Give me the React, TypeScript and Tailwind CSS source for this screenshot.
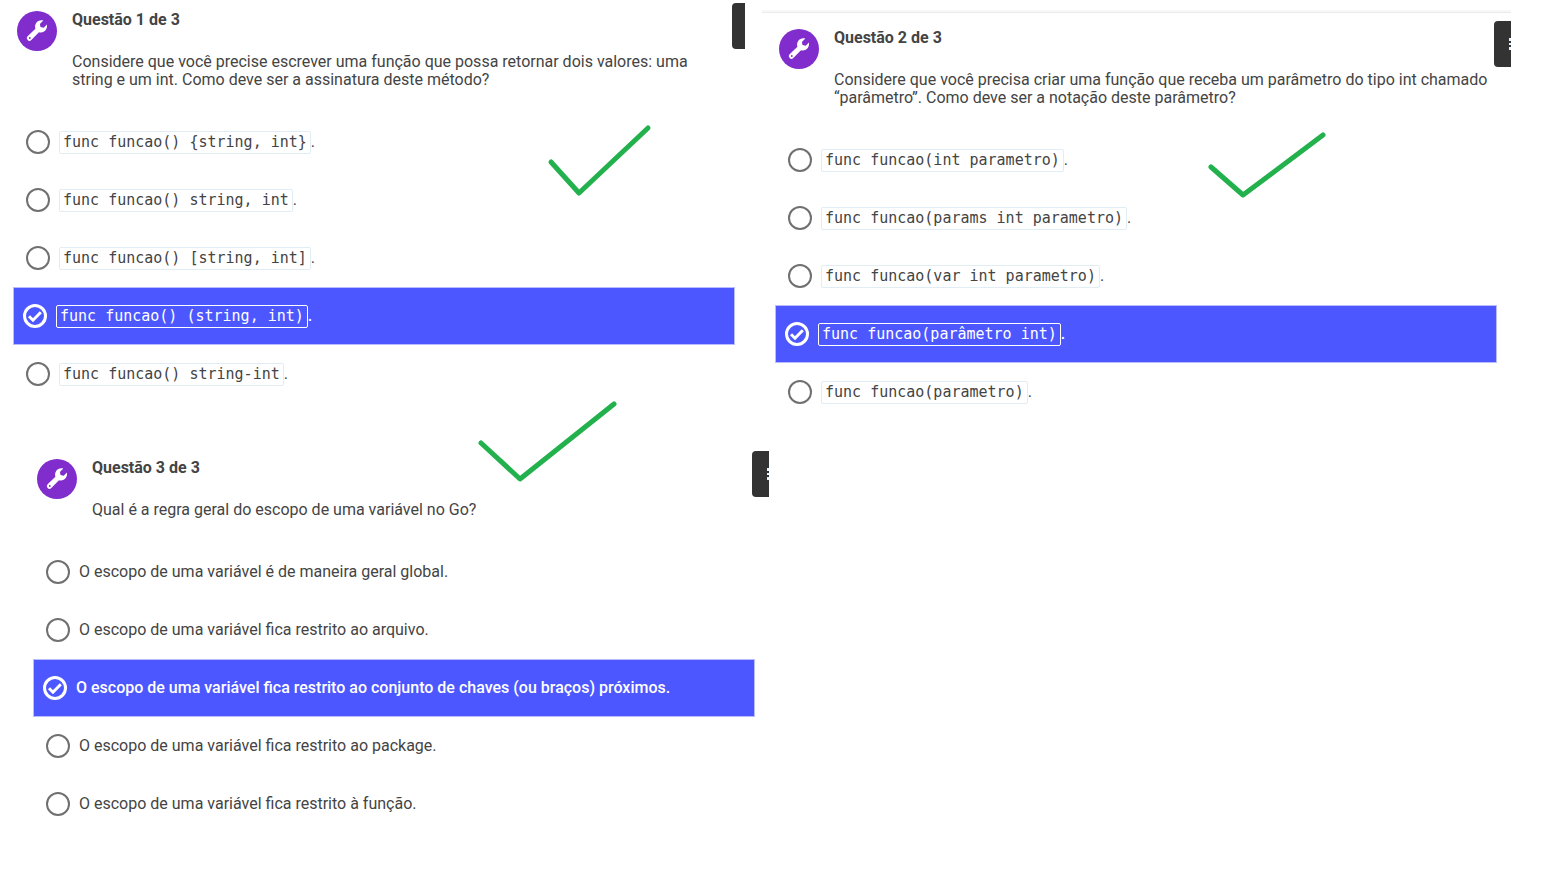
import { useState, type ReactNode } from "react";

type Question = {
  number: number;
  text: string;
  options: string[];
  answer: number;
  code: boolean;
};

const questions: Question[] = [
  {
    number: 1,
    text: "Considere que você precise escrever uma função que possa retornar dois valores: uma string e um int. Como deve ser a assinatura deste método?",
    options: [
      "func funcao() {string, int}",
      "func funcao() string, int",
      "func funcao() [string, int]",
      "func funcao() (string, int)",
      "func funcao() string-int",
    ],
    answer: 3,
    code: true,
  },
  {
    number: 2,
    text: "Considere que você precisa criar uma função que receba um parâmetro do tipo int chamado “parâmetro”. Como deve ser a notação deste parâmetro?",
    options: [
      "func funcao(int parametro)",
      "func funcao(params int parametro)",
      "func funcao(var int parametro)",
      "func funcao(parâmetro int)",
      "func funcao(parametro)",
    ],
    answer: 3,
    code: true,
  },
  {
    number: 3,
    text: "Qual é a regra geral do escopo de uma variável no Go?",
    options: [
      "O escopo de uma variável é de maneira geral global.",
      "O escopo de uma variável fica restrito ao arquivo.",
      "O escopo de uma variável fica restrito ao conjunto de chaves (ou braços) próximos.",
      "O escopo de uma variável fica restrito ao package.",
      "O escopo de uma variável fica restrito à função.",
    ],
    answer: 2,
    code: false,
  },
];

function WrenchIcon() {
  return (
    <svg viewBox="0 0 40 40" className="size-10" fill="currentColor" aria-hidden="true">
      <path d="M26.300 9.400L22.900 12.900L23.500 16.100L26.700 16.800L29.900 13.600C30.700 17.500 28 21.500 24 21.500C23.200 21.500 22.500 21.400 22 21.200L14.300 29a2.600 2.600 0 0 1-3.700-3.700L18.400 17.800C17 13 20.500 8.200 26.300 9.400z" />
      <circle cx="12.800" cy="27" r="0.900" fill="#812ccc" />
    </svg>
  );
}

function Option({
  name,
  text,
  code,
  checked,
  onSelect,
}: {
  name: string;
  text: string;
  code: boolean;
  checked: boolean;
  onSelect: () => void;
}) {
  return (
    <label
      className={`flex h-[58px] cursor-pointer items-center gap-[9px] ${
        checked
          ? "border border-[#b9bcff] bg-[#4d57ff] pl-[9px] font-medium text-white"
          : "pl-[13px]"
      }`}
    >
      <span className="relative flex size-6 shrink-0">
        <input
          type="radio"
          name={name}
          checked={checked}
          onChange={onSelect}
          className={`size-6 appearance-none rounded-full ${
            checked ? "border-3 border-white" : "border-2 border-[#707070]"
          }`}
        />
        {checked && (
          <svg
            viewBox="0 0 24 24"
            className="pointer-events-none absolute inset-0 size-6"
            fill="none"
            stroke="currentColor"
            strokeWidth="3"
            aria-hidden="true"
          >
            <path d="M6 12.200l4 4 7.800-8" />
          </svg>
        )}
      </span>
      {code ? (
        <span className="flex items-center">
          <code
            className={`rounded-xs border px-[3px] font-['DejaVu_Sans_Mono',monospace] text-[15px] leading-[21px] ${
              checked ? "border-white" : "border-[#e1edf5]"
            }`}
          >
            {text}
          </code>
          .
        </span>
      ) : (
        <span>{text}</span>
      )}
    </label>
  );
}

function QuestionPanel({
  question,
  narrow = false,
  mark,
}: {
  question: Question;
  narrow?: boolean;
  mark: ReactNode;
}) {
  const [selected, setSelected] = useState(question.answer);
  const name = `questao-${question.number}`;
  return (
    <section className="relative">
      <header className="flex items-start pl-[17px]">
        <span className="mt-[11px] flex size-10 shrink-0 items-center justify-center rounded-full bg-[#812ccc] text-white">
          <WrenchIcon />
        </span>
        <div className="ml-[15px] flex-1 pt-[11px]">
          <h2 className="font-bold">Questão {question.number} de 3</h2>
          <p className="mt-6">{question.text}</p>
        </div>
        <button
          type="button"
          aria-label="Menu"
          className={`mt-[3px] h-[46px] shrink-0 overflow-hidden rounded-l bg-[#333333] ${
            narrow ? "w-[13px]" : "w-[17px]"
          }`}
        >
          <span className="ml-[15px] flex w-4 flex-col gap-[2px]">
            <span className="h-[3px] bg-[#e8f4ff]" />
            <span className="h-[2px] bg-[#e8f4ff]" />
            <span className="h-[3px] bg-[#e8f4ff]" />
          </span>
        </button>
      </header>
      <div
        role="radiogroup"
        className={`mt-6 pl-[13px] ${narrow ? "pr-[10px]" : "pr-[14px]"}`}
      >
        {question.options.map((text, i) => (
          <Option
            key={text}
            name={name}
            text={text}
            code={question.code}
            checked={i === selected}
            onSelect={() => setSelected(i)}
          />
        ))}
      </div>
      {mark}
    </section>
  );
}

function Mark({ points, className }: { points: string; className: string }) {
  return (
    <svg
      width="142"
      height="84"
      className={`pointer-events-none absolute ${className}`}
      fill="none"
      stroke="#22b14c"
      strokeWidth="5"
      strokeLinecap="round"
      strokeLinejoin="round"
      aria-hidden="true"
    >
      <polyline points={points} />
    </svg>
  );
}

export default function App() {
  return (
    <main className="min-h-screen bg-white pb-12 font-[Roboto,sans-serif] text-[16px] leading-[18px] text-[#444444]">
      <div className="grid grid-cols-[745fr_749fr] items-start gap-[17px] pr-[39px]">
        <QuestionPanel
          question={questions[0]}
          narrow
          mark={<Mark points="4,38 32,69 101,4" className="top-[124px] left-[547px]" />}
        />
        <div>
          <div className="mt-[10px] mb-[5px] h-[3px] border-b border-[#ebebeb] bg-[#f8f8f8]" />
          <QuestionPanel
            question={questions[1]}
            mark={<Mark points="4,36 36,64 116,4" className="top-[113px] left-[445px]" />}
          />
        </div>
      </div>
      <div className="mt-[27px] w-1/2 pr-[6px] pl-5">
        <QuestionPanel
          question={questions[2]}
          mark={<Mark points="4,43 43,79 137,4" className="top-[-48px] left-[457px]" />}
        />
      </div>
    </main>
  );
}
